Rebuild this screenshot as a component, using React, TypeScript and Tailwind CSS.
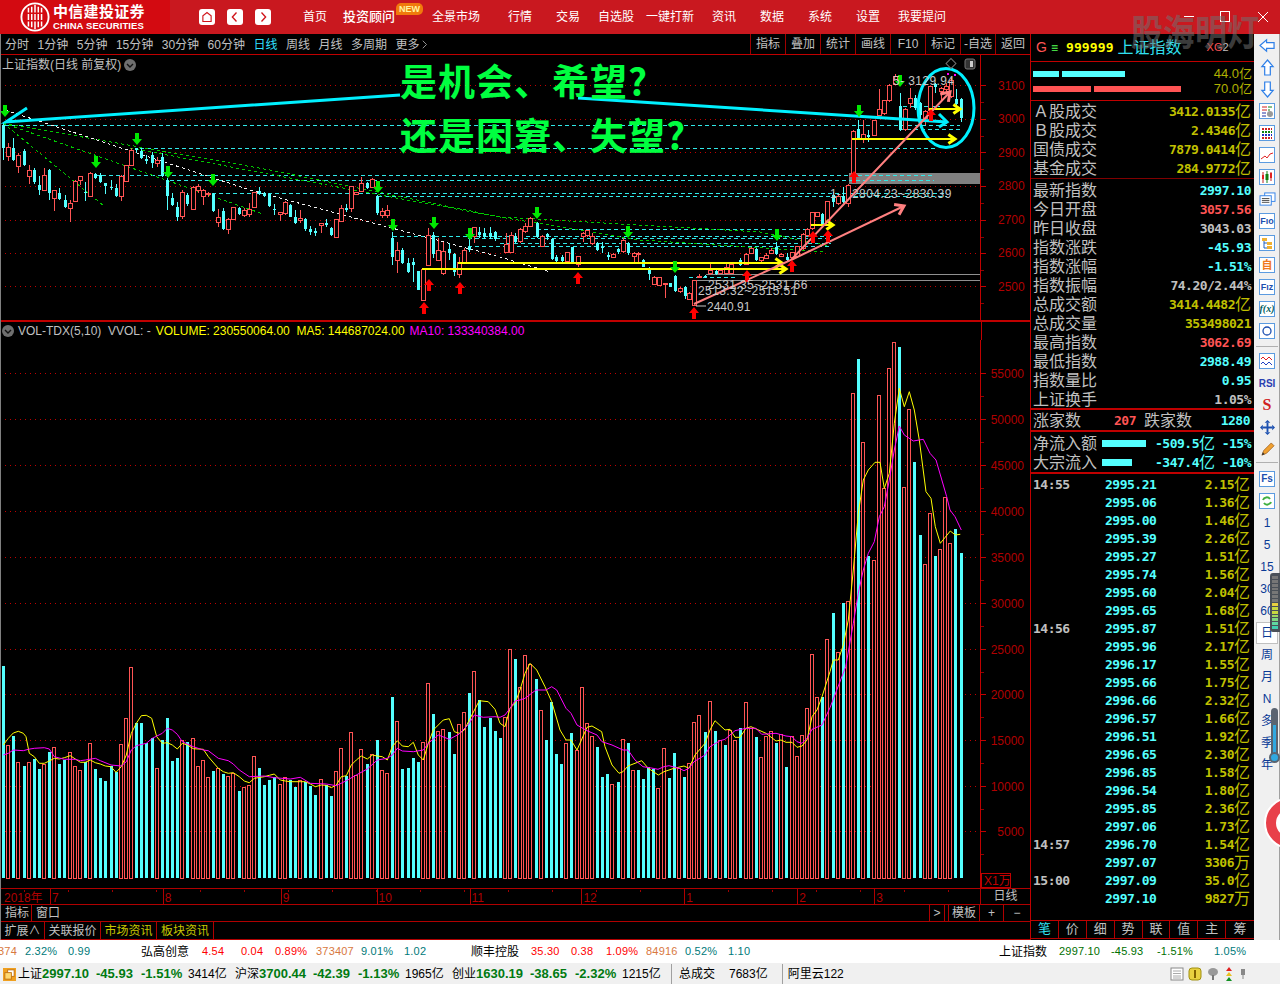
import React from "react";

const CY = "#54ffff";
const RD = "#ff5454";

type Bar = { k: string; x: number; t: number };

const parseBars = (s: string, fx: (v: number) => number, fy: (v: number) => number): Bar[] =>
  s.trim().split(/\s+/).map((p) => {
    const [a, b] = p.slice(1).split(":");
    return { k: p[0], x: fx(+a), t: fy(+b) };
  });

const vol1 = parseBars(
  "c10:78 r25:315 c40:288 r55:366 c73:378 r88:366 c103:357 c118:387 r133:372 c148:336 r163:321 c178:372 c193:360 r211:336 r226:378 r241:390 c256:366 r271:309 c286:387 c301:414 c316:423 c333:378 c348:396 r364:312 r379:234 r394:81 c409:249 c424:249 c439:309 c457:294 r472:384 c487:300 c502:234 c517:363 c532:354 r547:300 c562:306 r580:294 r595:378 r610:360 r625:411 c640:393 r655:384 c670:402 r685:408 r700:399 c718:453 r733:441 r748:435 r763:348 c778:384 c793:435 c808:420 c823:411 r841:432 r856:411 c871:420 c886:441 r901:420 c916:426 c931:438 c946:465 r964:417 c979:435 c994:468 r1009:393 r1024:324 c1039:408 r1054:276 r1069:405 r1084:327 c1102:372 r1117:342 c1132:300 r1147:390 r1162:399 c1177:171 r1192:243 c1207:387 c1225:384 c1240:354 c1255:366 r1270:306 r1285:129 c1300:222 r1315:273 r1330:267 c1348:276 c1363:342 r1378:252 r1393:216 c1408:159 r1423:93 c1438:180 c1453:261 c1471:234",
  (v) => v / 3,
  (v) => 640 + v / 3
);
const vol2 = parseBars(
  "c0:273 c15:294 r30:232 r45:27 c60:57 r75:141 r90:45 r105:72 c123:117 r138:210 c153:300 c168:186 c183:342 c198:372 r213:309 c228:279 r246:330 r261:141 r276:249 r291:288 c306:321 c321:411 c336:402 r351:432 c369:426 r384:297 c399:309 r414:390 c429:390 c444:417 c459:381 c474:387 r489:444 r507:324 c522:414 c537:339 r552:384 c567:411 r582:369 r597:246 r612:225 c630:276 r645:183 c660:273 r675:300 c690:315 r705:270 r720:300 c735:264 r753:186 r768:264 c783:291 r798:351 r813:288 r828:273 c843:309 r858:282 c873:381 r891:288 r906:348 r921:285 r936:204 r951:42 r966:171 c981:171",
  (v) => 495 + v / 3,
  (v) => 640 + v / 3
);
const vol3 = parseBars(
  "r382:897 c400:819 r415:936 c430:789 r445:783 r460:159 c475:57 r490:306 c505:648 r523:660 r538:165 r553:444 r568:84 r583:6 c598:21 r613:441 r628:207 c643:366 c661:585 r676:672 r691:519 c706:648 r721:627 r736:471 r751:609 c766:567 c784:639",
  (v) => 700 + v / 3,
  (v) => 340 + v / 3
);
const volBars = [...vol1, ...vol2, ...vol3];

const pts = (s: string, fx: (v: number) => number, fy: (v: number) => number) =>
  s.trim().split(/\s+/).map((p) => {
    const [a, b] = p.split(",");
    return `${fx(+a).toFixed(1)},${fy(+b).toFixed(1)}`;
  }).join(" ");

const x9 = (v: number) => v / 3;
const y9 = (v: number) => 640 + v / 3;
const x12 = (v: number) => 495 + v / 3;
const x10 = (v: number) => 700 + v / 3;
const y10 = (v: number) => 340 + v / 3;

const yellowLine = [
  pts("10,315 25,295 40,279 55,274 70,280 78,290 88,340 103,350 118,370 133,370 148,363 163,355 178,357 193,353 211,347 226,357 241,367 256,367 271,360 286,368 301,372 316,378 333,380 348,397 364,380 379,345 394,280 409,250 424,227 439,226 455,235 470,290 487,310 502,308 517,315 532,327 547,310 562,315 580,326 610,328 625,350 655,385 670,395 685,400 700,398 718,410 733,423 748,428 763,415 793,410 808,406 823,402 841,420 856,423 871,425 901,425 916,425 931,432 946,440 964,435 979,436 994,443 1009,435 1024,410 1039,407 1054,375 1069,360 1084,348 1102,357 1117,345 1132,348 1147,350 1162,360 1177,320 1192,302 1207,318 1225,320 1240,307 1255,345 1270,360 1285,310 1300,270 1330,240 1348,236 1363,275 1378,280 1393,270 1408,240 1438,182 1465,185", x9, y9),
  pts("0,208 15,250 30,260 45,205 60,190 75,150 90,100 105,70 125,90 150,140 170,185 195,270 213,300 228,300 246,330 276,262 291,258 320,275 330,320 351,375 372,400 384,395 399,378 440,362 460,385 490,405 507,395 537,385 567,378 582,385 600,345 630,310 645,270 660,242 690,270 705,268 720,292 735,292 753,265 768,260 813,280 843,303 858,300 873,307 891,307 906,322 921,318 936,300 951,230 966,210 981,170 1005,95", x12, y9),
  pts("400,960 415,960 430,915 445,840 460,690 475,520 490,420 505,390 525,367 540,367 553,445 568,400 583,250 598,145 613,200 628,155 643,210 658,300 678,455 693,475 706,560 721,610 751,573 766,585 781,583", x10, y10),
].join(" ");

const magentaLine = [
  pts("10,345 25,340 40,330 70,332 85,328 103,325 133,323 148,327 163,350 193,358 226,358 241,362 256,360 286,355 301,362 333,375 364,378 379,365 394,330 409,317 439,310 457,295 487,280 502,265 517,270 532,283 547,305 580,320 610,330 625,332 655,355 685,362 700,372 718,390 748,410 793,408 823,413 871,417 901,412 931,430 979,432 1009,437 1039,422 1069,405 1102,387 1132,360 1162,355 1177,345 1192,325 1207,333 1240,335 1270,330 1285,310 1315,285 1348,298 1378,282 1408,250 1423,225 1450,232", x9, y9),
  pts("0,230 15,232 30,225 45,205 60,183 75,180 90,175 123,150 153,150 170,140 185,150 213,205 228,220 246,255 276,272 306,285 321,305 351,315 384,330 399,330 420,360 444,380 474,385 489,388 507,380 522,377 552,385 567,392 582,385 597,365 630,345 645,320 675,302 690,298 720,272 753,265 783,265 800,283 843,280 873,288 891,290 906,305 921,310 936,295 951,268 981,255 1005,203", x12, y9),
  pts("437,980 460,850 475,760 490,690 505,640 523,605 538,530 553,500 568,420 583,330 598,258 613,285 640,303 670,298 690,340 708,360 740,470 750,510 765,530 784,570", x10, y10),
].join(" ");

type Cd = { k: string; x: number; h: number; t: number; b: number; l: number };
const parseCd = (s: string, fx: (v: number) => number, fy: (v: number) => number): Cd[] =>
  s.trim().split(/\s+/).map((p) => {
    const [a, h, t, b, l] = p.slice(1).split(",").map(Number);
    return { k: p[0], x: fx(a), h: fy(h), t: fy(t), b: fy(b), l: fy(l) };
  });

const candles1 = parseCd(
  "c10,70,75,145,180 r25,130,142,168,182 c40,115,145,180,182 r55,160,165,200,218 c73,148,152,195,198 r88,195,210,228,252 c103,205,210,245,252 c118,228,255,270,285 r133,205,225,270,272 c148,208,210,280,300 r163,270,270,295,332 c178,265,280,298,300 c196,285,300,322,325 r211,300,310,325,365 r226,240,243,305,305 r241,228,228,240,255 c256,245,275,278,302 r271,215,220,288,288 c286,220,222,235,238 c301,218,225,245,250 c316,248,250,258,282 c333,240,262,265,270 c348,252,265,288,292 r364,225,228,288,302 r379,195,195,243,245 r394,145,150,197,197 c409,143,145,150,160 c424,145,152,175,178 c439,165,178,183,192 c457,155,165,190,205 r472,172,180,190,200 c487,160,172,228,230 c502,235,240,288,330 c517,280,293,315,318 c532,305,320,350,362 r547,270,278,348,358 c562,278,285,313,318 r580,258,262,328,330 r595,252,258,272,278 r610,268,272,288,315 r625,275,280,282,290 c640,278,282,332,335 r655,328,352,368,382 c670,325,332,388,390 r685,355,358,388,402 r700,320,322,358,360 c718,322,325,342,345 r733,325,332,345,352 r748,310,328,342,352 r763,275,278,322,325 c778,262,272,282,285 c793,275,280,288,292 c808,278,282,318,320 c823,312,328,330,345 r841,335,338,342,362 r856,302,308,340,345 c871,312,315,350,352 c886,330,350,368,372 r901,330,355,362,368 c916,355,358,388,392 c931,378,388,395,405 c946,385,392,398,408 r964,368,370,375,400 c979,358,368,375,382 c994,382,385,405,408 r1009,358,358,412,412 r1024,315,325,365,365 c1039,312,325,330,335 r1054,258,260,325,335 r1069,275,277,283,285 r1084,232,250,275,275 c1102,245,248,265,268 r1117,235,238,262,262 c1132,285,288,340,345 r1147,325,335,345,355 r1162,315,330,345,355 c1177,395,415,472,495 r1192,425,452,480,518 c1207,445,450,490,492 c1225,475,490,515,520 c1240,475,485,495,545 c1255,512,514,570,570 r1270,508,508,600,600 r1285,385,405,495,495 c1300,395,405,462,475 r1315,415,452,480,480 r1330,425,455,520,525 c1348,430,448,460,480 c1363,460,462,515,528 r1378,470,488,522,535 r1393,445,452,488,488 c1408,415,440,450,455 r1423,382,382,410,430 c1438,380,395,405,415 c1453,385,400,410,418 c1471,380,398,412,418 c1486,392,396,418,422",
  (v) => v / 3,
  (v) => 100 + v / 3
);
const candles2 = parseCd(
  "r18,520,552,578,580 r32,515,525,578,580 c45,520,528,545,548 r60,505,508,545,548 r75,490,498,515,520 r90,472,475,498,500 c108,485,490,530,535 r123,525,530,558,560 c138,518,522,530,540 c153,535,537,597,600 c167,585,590,603,610 c182,585,590,603,605 r197,575,577,605,610 c212,560,562,605,608 r230,588,590,612,622 r245,515,520,530,545 r258,510,512,525,530 r273,520,528,550,555 c288,545,548,570,572 c303,545,560,565,578 c318,575,585,590,600 r333,580,584,593,595 c350,565,568,575,582 r365,535,540,575,578 c380,545,550,580,585 r395,575,580,590,605 r408,575,580,582,605 c423,598,600,622,622 c440,622,630,642,660 r455,648,652,672,675 r470,652,652,675,675 r487,668,670,672,715 c502,668,670,680,682 c517,645,648,692,695 r532,680,684,695,698 c547,678,680,708,718 r560,695,700,718,720 r575,660,662,735,735 r590,642,648,650,655 c605,645,647,651,655 r622,612,632,640,645 c638,630,632,642,645 r652,625,630,640,642 r668,612,622,640,642 r683,610,612,640,642 c711,595,600,615,618 r728,580,582,612,615 r743,560,565,580,582 c757,565,568,600,602 r772,590,592,600,605 r787,580,585,595,598 r802,565,570,580,582 c817,545,560,582,585 r832,580,582,590,592 c850,578,592,600,605 r865,575,578,592,600 r880,558,560,590,595 r895,520,523,565,570 r908,505,508,525,528 r923,455,458,505,510 r938,455,458,470,472 c953,460,462,495,497 r968,422,425,495,498 c985,395,405,425,440 r1000,405,410,430,435 c1015,380,408,425,430 r1030,372,375,430,440 r1045,210,213,340,345 c1060,180,208,235,240 r1075,180,222,238,250 c1090,210,225,232,245 r1107,180,182,225,228 r1122,88,148,165,168 r1137,120,122,160,165 r1152,72,75,120,125 r1167,42,48,72,75 c1182,100,138,210,212 r1197,145,148,208,212 r1212,85,115,130,145 c1227,105,115,145,150 c1242,125,130,165,180 r1257,150,155,175,195 r1272,78,80,150,155 c1288,70,72,80,100 r1303,80,85,95,120 r1318,70,78,88,100 r1333,55,60,110,115 c1348,88,118,132,148 c1365,115,118,175,185",
  (v) => 500 + v / 2.958,
  (v) => 60 + v / 3
);
const candles = [...candles1, ...candles2];

const cyanDash: [number, number, number][] = [
  [125, 5, 960], [148, 140, 938], [175, 95, 934], [180, 170, 934], [193, 212, 947], [196, 378, 947],
  [229, 537, 810], [236, 393, 831], [238, 468, 831], [243, 500, 831], [246, 468, 831], [277, 689, 735], [106, 903, 940], [129, 900, 960],
];

const downArrows: [number, number][] = [
  [5, 111], [137, 139], [96, 162], [168, 172], [213, 180], [378, 187], [393, 225], [434, 223], [470, 234], [537, 213], [628, 232], [675, 267], [777, 235], [859, 111], [900, 81],
];
const upArrows: [number, number][] = [
  [424, 308], [429, 285], [460, 288], [578, 278], [694, 313], [747, 276], [792, 266], [813, 237], [828, 236], [854, 177], [931, 115],
];

const priceLabels: [string, number][] = [["3100", 85], ["3000", 118.5], ["2900", 152], ["2800", 185.5], ["2700", 219.5], ["2600", 252.5], ["2500", 286]];
const volLabels: [string, number][] = [["55000", 373], ["50000", 419], ["45000", 465], ["40000", 511], ["35000", 556.5], ["30000", 602.5], ["25000", 648.5], ["20000", 694], ["15000", 740], ["10000", 786], ["5000", 831]];

const Arrowhead = ({ x, y, a, c, s = 10 }: { x: number; y: number; a: number; c: string; s?: number }) => {
  const r = (o: number) => `${x - s * Math.cos(a + o)},${y - s * Math.sin(a + o)}`;
  return <polyline points={`${r(0.6)} ${x},${y} ${r(-0.6)}`} fill="none" stroke={c} strokeWidth={3} />;
};

function PriceChart() {
  return (
    <svg viewBox="0 55 1030 267" className="block w-[1030px] h-[267px]">
      <g shapeRendering="crispEdges">
        {priceLabels.map(([, y]) => (
          <line key={y} x1={0} x2={980} y1={Math.round(y)} y2={Math.round(y)} stroke="#c00000" strokeDasharray="1 4" />
        ))}
        <rect x={849} y={173} width={131} height={11} fill="#808080" />
        <line x1={706} x2={980} y1={274.5} y2={274.5} stroke="#909090" />
        <line x1={693} x2={980} y1={280.5} y2={280.5} stroke="#909090" />
        <line x1={693.5} x2={693.5} y1={280} y2={304} stroke="#909090" />
        {cyanDash.map(([y, a, b], i) => (
          <line key={i} x1={a} x2={b} y1={y + 0.5} y2={y + 0.5} stroke="#30e8e8" strokeDasharray="4 3" />
        ))}
      </g>
      <g fill="none" strokeDasharray="3 3" shapeRendering="crispEdges">
        <line x1={3} y1={123} x2={104} y2={206} stroke="#00c800" />
        <line x1={3} y1={123} x2={263} y2={214} stroke="#00c800" />
        <polyline points="3,123 270,170 500,217 640,240 825,252" stroke="#00c800" />
        <polyline points="130,148 380,195 500,217 760,232 830,246" stroke="#00c800" />
        <polyline points="5,110 250,190 500,257 550,272" stroke="#f0f0f0" />
      </g>
      <g shapeRendering="crispEdges">
        {candles.map((c, i) => {
          const x = Math.round(c.x);
          const col = c.k === "c" ? CY : RD;
          return (
            <g key={i}>
              <line x1={x + 0.5} x2={x + 0.5} y1={c.h} y2={c.l} stroke={col} />
              {c.k === "c" ? (
                <rect x={x - 1} y={c.t} width={3} height={Math.max(c.b - c.t, 1)} fill={col} />
              ) : (
                <rect x={x - 1.5} y={c.t} width={4} height={Math.max(c.b - c.t, 1)} fill="#000" stroke={col} />
              )}
            </g>
          );
        })}
      </g>
      {/* annotations */}
      <g stroke={CY} strokeWidth={3} fill="none">
        <polyline points="27,108 6,122 400,95" strokeLinejoin="miter" stroke="#00f0ff" />
        <polyline points="578,98 947,122" stroke="#00f0ff" />
        <polyline points="939,114 947,122 939,127" stroke="#00f0ff" />
        <ellipse cx={946} cy={108} rx={28} ry={39.5} stroke="#00f0ff" />
      </g>
      <g stroke="#ffff00" strokeWidth={2} fill="none" shapeRendering="crispEdges">
        <line x1={422} x2={784} y1={269} y2={269} />
        <line x1={458} x2={780} y1={263} y2={263} />
        <line x1={852} x2={953} y1={139} y2={139} />
        <line x1={929} x2={958} y1={109} y2={109} />
        <line x1={811} x2={831} y1={225} y2={225} />
      </g>
      <Arrowhead x={786} y={269} a={0} c="#ffff00" s={8} />
      <Arrowhead x={782} y={263} a={0} c="#ffff00" s={8} />
      <Arrowhead x={955} y={139} a={0} c="#ffff00" s={8} />
      <Arrowhead x={960} y={109} a={0} c="#ffff00" s={8} />
      <Arrowhead x={833} y={225} a={0} c="#ffff00" s={8} />
      <g stroke="#ff8080" strokeWidth={2} fill="none">
        <polyline points="694,304 791,260 950,92" />
        <polyline points="791,260 904,206" />
      </g>
      <Arrowhead x={950} y={92} a={-0.81} c="#ff8080" s={10} />
      <Arrowhead x={904} y={206} a={-0.45} c="#ff8080" s={10} />
      {downArrows.map(([x, y], i) => (
        <polygon key={i} fill="#00e800" points={`${x - 2},${y - 6} ${x + 2},${y - 6} ${x + 2},${y} ${x + 5},${y} ${x},${y + 6} ${x - 5},${y} ${x - 2},${y}`} />
      ))}
      {upArrows.map(([x, y], i) => (
        <polygon key={i} fill="#ff0000" points={`${x - 2},${y + 6} ${x + 2},${y + 6} ${x + 2},${y} ${x + 5},${y} ${x},${y - 6} ${x - 5},${y} ${x - 2},${y}`} />
      ))}
      <rect x={947} y={73} width={2} height={2} fill="#ff00ff" />
      <rect x={954} y={74} width={2} height={2} fill="#ff00ff" />
      <g fontSize={12} fill="#c8c8c8">
        <text x={893} y={85} letterSpacing={0.4}>5- 3129.94</text>
        <text x={830} y={198}>1-</text>
        <text x={852} y={198} letterSpacing={0.4}>2804.23~2830.39</text>
        <text x={708} y={289} letterSpacing={0.4}>2531.35~2531.66</text>
        <text x={698} y={295} letterSpacing={0.4}>2513.32~2515.51</text>
        <line x1={696} x2={706} y1={306} y2={306} stroke="#c8c8c8" />
        <text x={707} y={311}>2440.91</text>
      </g>
      <rect x={947.5} y={60} width={7} height={7} fill="none" stroke="#707070" transform="rotate(45 951 63.5)" />
      <rect x={965} y={59} width={10} height={10} rx={2} fill="#333" stroke="#777" />
      <rect x={970} y={61} width={3} height={6} fill="#ccc" />
      {/* axis */}
      <g shapeRendering="crispEdges">
        <line x1={980.5} x2={980.5} y1={55} y2={322} stroke="#c00000" />
        {priceLabels.map(([, y]) => (
          <g key={y}>
            <line x1={981} x2={986} y1={Math.round(y)} y2={Math.round(y)} stroke="#c00000" />
            <line x1={981} x2={984} y1={Math.round(y) + 17} y2={Math.round(y) + 17} stroke="#900000" />
          </g>
        ))}
      </g>
      <g fontSize={12} fill="#b00000">
        {priceLabels.map(([t, y]) => (
          <text key={t} x={998} y={y + 4.5}>{t}</text>
        ))}
      </g>
    </svg>
  );
}

function VolumeChart() {
  return (
    <svg viewBox="0 340 1030 548" className="block w-[1030px] h-[548px]">
      <g shapeRendering="crispEdges">
        {volLabels.map(([, y]) => (
          <line key={y} x1={0} x2={980} y1={Math.round(y)} y2={Math.round(y)} stroke="#c00000" strokeDasharray="1 4" />
        ))}
        {volBars.map((b, i) => {
          const x = Math.round(b.x);
          return b.k === "c" ? (
            <rect key={i} x={x - 1} y={b.t} width={3} height={878 - b.t} fill={CY} />
          ) : (
            <rect key={i} x={x - 1.5} y={b.t} width={3} height={878 - b.t} fill="#000" stroke={RD} />
          );
        })}
        <line x1={980.5} x2={980.5} y1={340} y2={888} stroke="#c00000" />
        {volLabels.map(([, y]) => (
          <g key={y}>
            <line x1={981} x2={986} y1={Math.round(y)} y2={Math.round(y)} stroke="#c00000" />
            <line x1={981} x2={984} y1={Math.round(y) + 23} y2={Math.round(y) + 23} stroke="#900000" />
          </g>
        ))}
      </g>
      <polyline points={yellowLine} fill="none" stroke="#ffff00" />
      <polyline points={magentaLine} fill="none" stroke="#ff00ff" />
      <g fontSize={12} fill="#b00000">
        {volLabels.map(([t, y]) => (
          <text key={t} x={1024} y={y + 5} textAnchor="end">{t}</text>
        ))}
      </g>
      <rect x={981.5} y={873.5} width={29} height={14} fill="none" stroke="#c00000" />
      <text x={984} y={885} fontSize={12} fill="#c00000">X1万</text>
    </svg>
  );
}

function DateAxis() {
  const months: [string, number][] = [["7", 49], ["8", 162], ["9", 280], ["10", 376], ["11", 469], ["12", 581], ["1", 684], ["2", 797], ["3", 874]];
  return (
    <div className="flex h-[16px] border-t border-[#b00000]">
      <svg viewBox="0 888 980 16" className="block w-[980px] h-[16px]">
        {Array.from({ length: 22 }).map((_, i) => (
          <line key={i} x1={24 + i * 44} x2={24 + i * 44} y1={889} y2={891} stroke="#a00000" shapeRendering="crispEdges" />
        ))}
        <text x={3} y={901} fontSize={12} fill="#b00000">2018年</text>
        {months.map(([t, x]) => (
          <g key={t + x}>
            <line x1={x + 0.5} x2={x + 0.5} y1={888} y2={904} stroke="#b00000" shapeRendering="crispEdges" />
            <text x={x + 2} y={901} fontSize={12} fill="#b00000">{t}</text>
          </g>
        ))}
      </svg>
      <div className="w-[50px] border-l border-[#b00000] text-center text-[12px] leading-[15px] text-[#c0c0c0]">日线</div>
    </div>
  );
}

const HomeIcon = () => (
  <svg viewBox="0 0 16 16" className="w-[12px] h-[12px]" fill="none" stroke="#d0141a" strokeWidth="1.5"><path d="M2.5 14V6.5L8 2l5.5 4.5V14z" /></svg>
);
const Chev = ({ left }: { left?: boolean }) => (
  <svg viewBox="0 0 16 16" className="w-[12px] h-[12px]" fill="none" stroke="#d0141a" strokeWidth="1.8"><path d={left ? "M10 2 4.5 8l5.5 6" : "M6 2l5.5 6L6 14"} /></svg>
);
const NavBtn = ({ children }: { children: React.ReactNode }) => (
  <div className="flex h-[16px] w-[16px] items-center justify-center rounded-[3px] bg-white">{children}</div>
);

function Header() {
  return (
    <div className="flex h-[34px] items-center bg-[#c9181f] text-white">
      <div className="flex h-[34px] w-[170px] items-center bg-[#d30a11] pl-[20px]">
        <svg viewBox="0 0 32 32" className="h-[30px] w-[30px] shrink-0">
          <circle cx="16" cy="16" r="14.5" fill="#d30a11" stroke="#fff" strokeWidth="2" />
          <path d="M9 6v20M23 6v20M16 3v26M12.5 5v22M19.5 5v22" stroke="#fff" strokeWidth="1.6" />
          <path d="M5 12h22M5 20h22" stroke="#d30a11" strokeWidth="1.4" />
        </svg>
        <div className="ml-[3px] flex flex-col">
          <span className="whitespace-nowrap text-[15px] font-bold leading-[18px] tracking-[0.3px]">中信建投证券</span>
          <span className="whitespace-nowrap text-[9.5px] font-bold leading-[10px] tracking-[0.1px]">CHINA SECURITIES</span>
        </div>
      </div>
      <div className="ml-[29px] flex gap-[12px]">
        <NavBtn><HomeIcon /></NavBtn>
        <NavBtn><Chev left /></NavBtn>
        <NavBtn><Chev /></NavBtn>
      </div>
      <div className="ml-[32px] flex items-center whitespace-nowrap text-[12px]">
        <span className="w-[40px]">首页</span>
        <span className="relative w-[89px] text-[13px] font-medium">
          投资顾问
          <span className="absolute left-[53px] top-[-4px] rounded-t-[5px] rounded-br-[5px] bg-[#f07a0c] px-[3px] text-[9px] font-bold leading-[12px] text-[#fff4a0]">NEW</span>
        </span>
        <span className="w-[76px]">全景市场</span>
        <span className="w-[48px]">行情</span>
        <span className="w-[42px]">交易</span>
        <span className="w-[48px]">自选股</span>
        <span className="w-[66px]">一键打新</span>
        <span className="w-[48px]">资讯</span>
        <span className="w-[48px]">数据</span>
        <span className="w-[48px]">系统</span>
        <span className="w-[42px]">设置</span>
        <span>我要提问</span>
      </div>
    </div>
  );
}

function Toolbar() {
  const left = ["分时", "1分钟", "5分钟", "15分钟", "30分钟", "60分钟"];
  const right = ["叠加", "统计", "画线", "F10", "标记", "-自选", "返回"];
  return (
    <div className="flex h-[21px] items-center justify-between border-b border-[#c00000] text-[12px] text-[#c0c0c0]">
      <div className="flex items-center gap-[8.5px] pl-[4px] pt-[1px]">
        {left.map((t) => <span key={t}>{t}</span>)}
        <span className="text-[#30e0ff]">日线</span>
        <span>周线</span>
        <span>月线</span>
        <span>多周期</span>
        <span className="flex items-center">更多
          <svg viewBox="0 0 8 12" className="ml-[2px] h-[11px] w-[6px]" fill="none" stroke="#c0c0c0"><path d="M1 1l5 5-5 5" /></svg>
        </span>
      </div>
      <div className="flex h-full">
        <span className="flex w-[35px] items-center justify-center border-l border-[#a00000]">指标</span>
        {right.map((t) => (
          <span key={t} className="flex w-[35px] items-center justify-center border-l border-[#a00000]">{t}</span>
        ))}
      </div>
    </div>
  );
}

const CircleDown = () => (
  <svg viewBox="0 0 12 12" className="h-[12px] w-[12px] shrink-0">
    <circle cx="6" cy="6" r="6" fill="#6f6f6f" />
    <path d="M3 5l3 3 3-3" fill="none" stroke="#111" strokeWidth="1.4" />
  </svg>
);

function ChartColumn() {
  return (
    <div className="relative flex w-[1030px] flex-col overflow-hidden border-l border-[#808080]">
      <Toolbar />
      <div className="relative h-[267px] border-b-2 border-[#c00000]">
        <div className="-ml-px">
          <PriceChart />
        </div>
        <div className="absolute left-[1px] top-[3px] flex items-center gap-[3px] text-[12px] leading-[14px] text-[#c0c0c0]">
          <span>上证指数(日线 前复权)</span>
          <CircleDown />
        </div>
        <div className="absolute left-[399px] top-[5px] whitespace-nowrap font-['Noto_Sans_CJK_SC',sans-serif] text-[37px] font-bold leading-[40px] tracking-[1px] text-[#00ff40]">是机会、希望?</div>
        <div className="absolute left-[399px] top-[59px] whitespace-nowrap font-['Noto_Sans_CJK_SC',sans-serif] text-[37px] font-bold leading-[40px] tracking-[1px] text-[#00ff40]">还是困窘、失望?</div>
      </div>
      <div className="flex h-[18px] w-[981px] items-center gap-[4px] border-r border-[#c00000] pl-[1px] text-[12px] leading-[14px]">
        <CircleDown />
        <span className="text-[#c0c0c0]">VOL-TDX(5,10)&nbsp; VVOL: -</span>
        <span className="ml-[1px] text-[#ffff00]">VOLUME: 230550064.00&nbsp; MA5: 144687024.00</span>
        <span className="ml-[1px] text-[#ff00ff]">MA10: 133340384.00</span>
      </div>
      <div className="-ml-px">
        <VolumeChart />
      </div>
      <DateAxis />
      <div className="flex h-[18px] items-center border-y border-[#b00000] text-[12px] text-[#c0c0c0]">
        <span className="w-[31px] border-r border-[#b00000] pl-[4px]">指标</span>
        <span className="ml-[4px]">窗口</span>
        <div className="ml-auto flex h-full items-center">
          <span className="flex h-full w-[15px] items-center justify-center border-l border-[#b00000]">&gt;</span>
          <span className="h-full w-[5px] border-x border-[#b00000]" />
          <span className="flex h-full w-[31px] items-center justify-center border-r border-[#b00000]">模板</span>
          <span className="flex h-full w-[24px] items-center justify-center border-r border-[#b00000]">+</span>
          <span className="flex h-full w-[26px] items-center justify-center">−</span>
        </div>
      </div>
      <div className="flex h-[18px] items-center border-b border-[#b00000] text-[12px] text-[#c0c0c0]">
        <span className="flex h-full w-[44px] items-center justify-center border-r border-[#b00000]">扩展∧</span>
        <span className="flex h-full w-[56px] items-center justify-center border-r border-[#b00000]">关联报价</span>
        <span className="flex h-full w-[56px] items-center justify-center border-r border-[#b00000] text-[#c8c800]">市场资讯</span>
        <span className="flex h-full w-[57px] items-center justify-center border-r border-[#b00000] text-[#c8c800]">板块资讯</span>
      </div>
    </div>
  );
}

const NUM = "font-['DejaVu_Sans_Mono'] text-[13px] font-bold tracking-[-0.5px]";

const Yi = ({ u = "亿" }: { u?: string }) => <span className="w-[16px] text-[16px] font-normal leading-[18px] text-[#c0c000]">{u}</span>;

function InfoRow({ label, value, cls, unit }: { label: string; value: string; cls: string; unit?: boolean }) {
  return (
    <div className="flex h-[19px] items-center justify-between pl-[2px] pr-[3px]">
      <span className="text-[16px] leading-[19px] text-[#c0c0c0]">{label}</span>
      <span className="flex items-center">
        <span className={`${NUM} ${cls}`}>{value}</span>
        {unit && <Yi />}
      </span>
    </div>
  );
}

type Tick = { time?: string; p: string; v: string; u: string };
const ticks: Tick[] = [
  { time: "14:55", p: "2995.21", v: "2.15", u: "亿" }, { p: "2995.06", v: "1.36", u: "亿" }, { p: "2995.00", v: "1.46", u: "亿" }, { p: "2995.39", v: "2.26", u: "亿" },
  { p: "2995.27", v: "1.51", u: "亿" }, { p: "2995.74", v: "1.56", u: "亿" }, { p: "2995.60", v: "2.04", u: "亿" }, { p: "2995.65", v: "1.68", u: "亿" },
  { time: "14:56", p: "2995.87", v: "1.51", u: "亿" }, { p: "2995.96", v: "2.17", u: "亿" }, { p: "2996.17", v: "1.55", u: "亿" }, { p: "2995.66", v: "1.75", u: "亿" },
  { p: "2996.66", v: "2.32", u: "亿" }, { p: "2996.57", v: "1.66", u: "亿" }, { p: "2996.51", v: "1.92", u: "亿" }, { p: "2996.65", v: "2.30", u: "亿" },
  { p: "2996.85", v: "1.58", u: "亿" }, { p: "2996.54", v: "1.80", u: "亿" }, { p: "2995.85", v: "2.36", u: "亿" }, { p: "2997.06", v: "1.73", u: "亿" },
  { time: "14:57", p: "2996.70", v: "1.54", u: "亿" }, { p: "2997.07", v: "3306", u: "万" },
  { time: "15:00", p: "2997.09", v: "35.0", u: "亿" }, { p: "2997.10", v: "9827", u: "万" },
];

function RightPanel() {
  return (
    <div className="flex w-[224px] flex-col border-l border-[#c00000]">
      <div className="flex h-[28px] items-center border-b border-[#c00000] pl-[5px]">
        <span className="w-[10px] text-[14px] text-[#ff5454]">G</span>
        <span className="ml-[5px] w-[8px] text-[12px] text-[#54ff54]">≡</span>
        <span className="ml-[7px] font-['DejaVu_Sans_Mono'] text-[13px] font-bold tracking-[0.1px] text-[#ffff00]">999999</span>
        <span className="ml-[4px] text-[16px] leading-[20px] text-[#30e0f0]">上证指数</span>
        <span className="ml-[25px] text-[11px] text-[#ff5454]">XG</span>
        <span className="text-[11px] text-[#c0c0c0]">2</span>
      </div>
      <div className="flex h-[39px] flex-col border-b border-[#c00000] pr-[2px] pt-[4px]">
        <div className="flex h-[15px] items-center pl-[2px]">
          <div className="flex gap-[3px]">
            <div className="h-[6px] w-[26px] bg-[#54ffff]" />
            <div className="h-[6px] w-[63px] bg-[#54ffff]" />
          </div>
          <span className="ml-auto text-[13px] leading-[15px] text-[#b0b000]">44.0亿</span>
        </div>
        <div className="flex h-[15px] items-center pl-[2px]">
          <div className="flex gap-[3px]">
            <div className="h-[6px] w-[58px] bg-[#ff5454]" />
            <div className="h-[6px] w-[87px] bg-[#ff5454]" />
          </div>
          <span className="ml-auto text-[13px] leading-[15px] text-[#b0b000]">70.0亿</span>
        </div>
      </div>
      <div className="h-[78px] border-b border-[#800000] pt-[1px]">
        <InfoRow label="Ａ股成交" value="3412.0135" cls="text-[#c0c000]" unit />
        <InfoRow label="Ｂ股成交" value="2.4346" cls="text-[#c0c000]" unit />
        <InfoRow label="国债成交" value="7879.0414" cls="text-[#c0c000]" unit />
        <InfoRow label="基金成交" value="284.9772" cls="text-[#c0c000]" unit />
      </div>
      <div className="h-[231px] border-b-2 border-[#c00000] pt-[2px]">
        <InfoRow label="最新指数" value="2997.10" cls="text-[#54ffff]" />
        <InfoRow label="今日开盘" value="3057.56" cls="text-[#ff5454]" />
        <InfoRow label="昨日收盘" value="3043.03" cls="text-[#c0c0c0]" />
        <InfoRow label="指数涨跌" value="-45.93" cls="text-[#54ffff]" />
        <InfoRow label="指数涨幅" value="-1.51%" cls="text-[#54ffff]" />
        <InfoRow label="指数振幅" value="74.20/2.44%" cls="text-[#c0c0c0]" />
        <InfoRow label="总成交额" value="3414.4482" cls="text-[#c0c000]" unit />
        <InfoRow label="总成交量" value="353498021" cls="text-[#c0c000]" />
        <InfoRow label="最高指数" value="3062.69" cls="text-[#ff5454]" />
        <InfoRow label="最低指数" value="2988.49" cls="text-[#54ffff]" />
        <InfoRow label="指数量比" value="0.95" cls="text-[#54ffff]" />
        <InfoRow label="上证换手" value="1.05%" cls="text-[#c0c0c0]" />
      </div>
      <div className="flex h-[22px] items-center justify-between border-b-2 border-[#c00000] pl-[2px] pr-[4px] pt-[1px]">
        <span className="w-[81px] text-[16px] text-[#c0c0c0]">涨家数</span>
        <span className={`${NUM} text-[#ff5454]`}>207</span>
        <span className="ml-[8px] text-[16px] text-[#c0c0c0]">跌家数</span>
        <span className={`${NUM} ml-auto text-[#54ffff]`}>1280</span>
      </div>
      <div className="h-[42px] border-b-2 border-[#c00000] pr-[3px] pt-[2px]">
        <div className="flex h-[19px] items-center pl-[2px]">
          <span className="w-[69px] text-[16px] leading-[19px] text-[#c0c0c0]">净流入额</span>
          <div className="h-[7px] w-[44px] bg-[#54ffff]" />
          <span className={`${NUM} ml-[9px] text-[#54ffff]`}>-509.5</span>
          <span className="text-[16px] leading-[19px] text-[#54ffff]">亿</span>
          <span className={`${NUM} ml-auto text-[#54ffff]`}>-15%</span>
        </div>
        <div className="flex h-[19px] items-center pl-[2px]">
          <span className="w-[69px] text-[16px] leading-[19px] text-[#c0c0c0]">大宗流入</span>
          <div className="h-[7px] w-[30px] bg-[#54ffff]" />
          <span className={`${NUM} ml-[23px] text-[#54ffff]`}>-347.4</span>
          <span className="text-[16px] leading-[19px] text-[#54ffff]">亿</span>
          <span className={`${NUM} ml-auto text-[#54ffff]`}>-10%</span>
        </div>
      </div>
      <div className="flex h-[447px] flex-col border-b border-[#c00000] pt-[2px]">
        {ticks.map((t, i) => (
          <div key={i} className="flex h-[18px] items-center pl-[2px] pr-[4px]">
            <span className={`${NUM} w-[72px] text-[#c0c0c0]`}>{t.time ?? ""}</span>
            <span className={`${NUM} text-[#54ffff]`}>{t.p}</span>
            <span className="ml-auto flex items-center">
              <span className={`${NUM} text-[#c0c000]`}>{t.v}</span>
              <Yi u={t.u} />
            </span>
          </div>
        ))}
      </div>
      <div className="grid h-[18px] grid-cols-8 border-b border-[#b00000] text-[13px] leading-[16px] text-[#c0c0c0]">
        {["笔", "价", "细", "势", "联", "值", "主", "筹"].map((t, i) => (
          <span key={t} className={i === 0 ? "border-r border-[#b00000] text-center text-[#30e0f0]" : "border-r border-[#b00000] text-center last:border-r-0"}>{t}</span>
        ))}
      </div>
    </div>
  );
}

const Box = ({ children }: { children: React.ReactNode }) => (
  <div className="flex h-[16px] w-[16px] items-center justify-center overflow-hidden border border-[#5b9be0] bg-white text-[9px] font-bold leading-none text-[#1c4fb0]">{children}</div>
);

const SideRow = ({ children }: { children: React.ReactNode }) => (
  <div className="flex h-[22px] items-center justify-center">{children}</div>
);

function Sidebar() {
  const nums = ["1", "5", "15", "30", "60"];
  const cn = ["周", "月", "N", "多", "季", "年"];
  const strokeB = "#2f80e8";
  return (
    <div className="relative flex w-[26px] flex-col border-r border-[#a0a0a0] bg-[#f0f0f0] pl-[1px]">
      <SideRow><svg viewBox="0 0 18 16" className="h-[15px] w-[17px]" fill="#fff" stroke={strokeB} strokeWidth="1.3"><path d="M1 8l7-6v3h8v6H8v3z" /></svg></SideRow>
      <SideRow><svg viewBox="0 0 16 18" className="h-[17px] w-[15px]" fill="#fff" stroke={strokeB} strokeWidth="1.3"><path d="M8 1l6 7h-3v9H5V8H2z" /></svg></SideRow>
      <SideRow><svg viewBox="0 0 16 18" className="h-[17px] w-[15px]" fill="#fff" stroke={strokeB} strokeWidth="1.3"><path d="M8 17l6-7h-3V1H5v9H2z" /></svg></SideRow>
      <SideRow><Box><svg viewBox="0 0 14 14" className="h-[14px] w-[14px]"><path d="M2 3h5M2 6h5" stroke="#d02020" /><path d="M8 3h4M8 6h2" stroke="#108010" /><path d="M2 9h4M2 12h4" stroke="#2030a0" /><circle cx="10" cy="10" r="3" fill="#999" /></svg></Box></SideRow>
      <SideRow><Box><svg viewBox="0 0 14 14" className="h-[14px] w-[14px]"><path d="M2 3h10" stroke="#d02020" strokeWidth="2" strokeDasharray="2 1" /><path d="M2 6h10" stroke="#108010" strokeWidth="2" strokeDasharray="2 1" /><path d="M2 9h10" stroke="#2030c0" strokeWidth="2" strokeDasharray="2 1" /><path d="M2 12h10" stroke="#d02020" strokeWidth="2" strokeDasharray="2 1" /></svg></Box></SideRow>
      <SideRow><Box><svg viewBox="0 0 14 14" className="h-[14px] w-[14px]"><path d="M1 11l4-3 2 2 3-4 3-1" fill="none" stroke="#e02020" /></svg></Box></SideRow>
      <SideRow><Box><svg viewBox="0 0 14 14" className="h-[14px] w-[14px]"><path d="M3 2v11" stroke="#c02020" /><rect x="2" y="5" width="2" height="4" fill="#e02020" /><path d="M7 1v12" stroke="#108010" /><rect x="5.5" y="4" width="3" height="6" fill="#108010" /><path d="M11 2v9" stroke="#c02020" /><rect x="10" y="3" width="2" height="5" fill="#e02020" /></svg></Box></SideRow>
      <SideRow><svg viewBox="0 0 18 16" className="h-[15px] w-[17px]"><rect x="6" y="1" width="11" height="9" fill="#fff" stroke={strokeB} /><rect x="1" y="4" width="12" height="10" fill="#fff" stroke={strokeB} /><path d="M3 7h8M3 9h8M3 11h8" stroke="#444" /></svg></SideRow>
      <SideRow><Box><span>Fıo</span></Box></SideRow>
      <SideRow><Box><svg viewBox="0 0 14 14" className="h-[14px] w-[14px]"><rect x="2" y="2" width="5" height="3" fill="#f0b030" /><rect x="7" y="6" width="5" height="3" fill="#f0b030" /><rect x="7" y="10" width="5" height="3" fill="#f0b030" /><path d="M4 5v7h3M4 7h3" fill="none" stroke="#2060c0" /></svg></Box></SideRow>
      <SideRow><Box><span className="text-[11px] text-[#f07820]">自</span></Box></SideRow>
      <SideRow><Box><span>Fız</span></Box></SideRow>
      <SideRow><Box><span className="font-['Liberation_Serif'] text-[10px] italic text-[#006060]">f(x)</span></Box></SideRow>
      <SideRow><Box><svg viewBox="0 0 14 14" className="h-[14px] w-[14px]"><circle cx="7" cy="7" r="4" fill="none" stroke="#1c4fb0" strokeWidth="1.3" /></svg></Box></SideRow>
      <div className="mx-[1px] mt-[3px] h-[2px] border-b border-[#b0b0b0]" />
      <div className="h-[3px]" />
      <SideRow><Box><svg viewBox="0 0 14 14" className="h-[14px] w-[14px]" fill="none"><path d="M1 5l2-2 3 3 3-3 3 3" stroke="#e02020" /><path d="M1 10l2-2 3 3 3-3 3 3" stroke="#2040c0" /></svg></Box></SideRow>
      <SideRow><span className="text-[10px] font-bold text-[#2a3fb0]">RSI</span></SideRow>
      <SideRow><span className="font-['Liberation_Serif'] text-[16px] font-bold text-[#d02020]">S</span></SideRow>
      <SideRow><svg viewBox="0 0 16 16" className="h-[15px] w-[15px]" fill="#1c50b0"><path d="M8 0l3 3H5zM8 16l-3-3h6zM0 8l3-3v6zM16 8l-3 3V5z" /><path d="M8 3v10M3 8h10" stroke="#1c50b0" strokeWidth="2" /></svg></SideRow>
      <SideRow><svg viewBox="0 0 16 16" className="h-[15px] w-[15px]"><path d="M2 14l2-5 8-8 3 3-8 8z" fill="#f0a030" stroke="#905010" strokeWidth="0.7" /><path d="M2 14l1-3 2 2z" fill="#333" /></svg></SideRow>
      <div className="mx-[1px] h-[3px] border-b border-[#b0b0b0]" />
      <div className="h-[5px]" />
      <SideRow><Box><span className="text-[10px]">Fs</span></Box></SideRow>
      <SideRow><Box><svg viewBox="0 0 14 14" className="h-[14px] w-[14px]" fill="none" stroke="#40b040" strokeWidth="2"><path d="M3 6a4 4 0 0 1 7-1M11 8a4 4 0 0 1-7 1" /></svg></Box></SideRow>
      <div className="flex flex-col text-center text-[12px] text-[#0a3a96]">
        {nums.map((n) => <span key={n} className="h-[22px] leading-[22px]">{n}</span>)}
        <span className="mx-[1px] h-[22px] border border-[#c0c0c0] bg-white leading-[20px]">日</span>
        {cn.map((n) => <span key={n} className="h-[22px] leading-[22px]">{n}</span>)}
      </div>
      {/* floating widgets */}
      <div className="absolute left-[16px] top-[539px] flex h-[59px] w-[10px] flex-col gap-px rounded-l-[3px] bg-[#4a5058] px-[2px] py-[3px]">
        {["#777", "#777", "#777", "#777", "#777", "#777", "#777", "#e8d040", "#c8d840", "#c8d840", "#a0d860", "#80d880", "#60d8a0", "#40d0b0"].map((c, i) => (
          <div key={i} className="h-[3px] w-full" style={{ background: c }} />
        ))}
      </div>
      <div className="absolute left-[17px] top-[674px] h-[50px] w-[7px] rounded-full bg-[#5a6470]">
        <div className="mx-auto mt-[17px] h-[30px] w-[3px] bg-[#30a8e0]" />
      </div>
      <div className="absolute left-[15px] top-[718px] h-[11px] w-[11px] rounded-full border-2 border-[#5a6470] bg-[#30a8e0]" />
    </div>
  );
}

function QuoteStrip() {
  const N = "font-['Liberation_Sans'] text-[11px] tracking-[0.2px]";
  const T = "text-[#007a7a]";
  const R = "text-[#ff0000]";
  const O = "text-[#d87840]";
  return (
    <div className="relative flex h-[23px] items-center overflow-hidden bg-white text-black">
      <span className={`${N} ${O} ml-[-2px] w-[27px]`}>374</span>
      <span className={`${N} ${T} w-[43px]`}>2.32%</span>
      <span className={`${N} ${T} w-[73px]`}>0.99</span>
      <span className="w-[61px] text-[12px]">弘高创意</span>
      <span className={`${N} ${R} w-[39px]`}>4.54</span>
      <span className={`${N} ${R} w-[34px]`}>0.04</span>
      <span className={`${N} ${R} w-[41px]`}>0.89%</span>
      <span className={`${N} ${O} w-[45px]`}>373407</span>
      <span className={`${N} ${T} w-[43px]`}>9.01%</span>
      <span className={`${N} ${T} w-[67px]`}>1.02</span>
      <span className="w-[60px] text-[12px]">顺丰控股</span>
      <span className={`${N} ${R} w-[40px]`}>35.30</span>
      <span className={`${N} ${R} w-[35px]`}>0.38</span>
      <span className={`${N} ${R} w-[40px]`}>1.09%</span>
      <span className={`${N} ${O} w-[39px]`}>84916</span>
      <span className={`${N} ${T} w-[43px]`}>0.52%</span>
      <span className={`${N} ${T} w-[271px]`}>1.10</span>
      <span className="w-[60px] text-[12px]">上证指数</span>
      <span className={`${N} w-[52px] text-[#007000]`}>2997.10</span>
      <span className={`${N} w-[46px] text-[#007000]`}>-45.93</span>
      <span className={`${N} w-[57px] text-[#007000]`}>-1.51%</span>
      <span className={`${N} ${T}`}>1.05%</span>
    </div>
  );
}

function StatusBar() {
  const G = "font-['Liberation_Sans'] text-[13px] font-bold text-[#007a10]";
  const group = (name: string, a: string, b: string, c: string, d: string) => (
    <div className="flex items-center">
      <span className="w-[24px] text-[12px]">{name}</span>
      <span className={`${G} w-[54px]`}>{a}</span>
      <span className={`${G} w-[45px]`}>{b}</span>
      <span className={`${G} w-[47px]`}>{c}</span>
      <span className="w-[47px] text-[12px]">{d}</span>
    </div>
  );
  return (
    <div className="flex h-[21px] items-center whitespace-nowrap bg-[#f0f0f0] pt-[1px] text-black">
      <svg viewBox="0 0 14 14" className="ml-[3px] h-[13px] w-[13px] shrink-0">
        <rect width="14" height="14" fill="#f0a020" />
        <rect x="5" y="2" width="7" height="7" fill="#fff" stroke="#c07010" />
        <rect x="2" y="5" width="7" height="7" fill="#ffd870" stroke="#c07010" />
      </svg>
      <div className="ml-[2px]">{group("上证", "2997.10", "-45.93", "-1.51%", "3414亿")}</div>
      {group("沪深", "3700.44", "-42.39", "-1.13%", "1965亿")}
      {group("创业", "1630.19", "-38.65", "-2.32%", "1215亿")}
      <div className="ml-[2px] flex h-full items-center border-l border-[#a0a0a0] pl-[7px]">
        <span className="w-[50px] text-[12px]">总成交</span>
        <span className="text-[12px]">7683亿</span>
      </div>
      <div className="ml-[14px] flex h-full items-center border-l border-[#a0a0a0] pl-[5px] text-[12px]">阿里云122</div>
      <div className="ml-auto mr-[34px] flex items-center gap-[4px]">
        <svg viewBox="0 0 14 14" className="h-[14px] w-[14px]"><rect x="1" y="1" width="12" height="12" fill="#fff" stroke="#888" /><path d="M3 4h8M3 6.500h8M3 9h8M3 11h8" stroke="#aaa" /></svg>
        <svg viewBox="0 0 14 14" className="h-[14px] w-[14px]"><rect x="1" y="1" width="12" height="12" rx="3" fill="#e8d040" stroke="#a09010" /><path d="M7 3v8" stroke="#806000" strokeWidth="2" /></svg>
        <svg viewBox="0 0 14 14" className="h-[14px] w-[14px]"><ellipse cx="7" cy="5" rx="5" ry="4" fill="#999" /><path d="M7 8v5" stroke="#777" strokeWidth="2" /></svg>
        <svg viewBox="0 0 10 14" className="h-[14px] w-[10px]"><path d="M5 0l3 4H2z" fill="#e02020" /><path d="M5 5l3 4H2z" fill="#e8c020" /><path d="M5 10l3 4H2z" fill="#109020" /></svg>
        <svg viewBox="0 0 6 14" className="ml-[2px] h-[14px] w-[6px]"><rect x="1" y="2" width="4" height="6" fill="#888" /><rect x="2.500" y="8" width="1" height="4" fill="#888" /></svg>
      </div>
    </div>
  );
}

export default function App() {
  return (
    <div className="relative flex h-[984px] w-[1280px] flex-col overflow-hidden bg-black font-['Liberation_Sans','Noto_Sans_CJK_SC',sans-serif]">
      <Header />
      <div className="flex h-[906px] text-[12px]">
        <ChartColumn />
        <RightPanel />
        <Sidebar />
      </div>
      <QuoteStrip />
      <StatusBar />
      {/* red roundel at the right edge */}
      <div className="absolute left-[1264px] top-[797px] h-[52px] w-[52px] rounded-full border-[2px] border-white bg-white">
        <div className="h-full w-full rounded-full border-[10px] border-[#e8404a] bg-white" />
      </div>
      {/* window controls */}
      <div className="absolute left-[1184px] top-[11px] flex items-center gap-[26px] text-white">
        <div className="h-px w-[10px] bg-white" />
        <div className="h-[11px] w-[10px] border border-white" />
        <svg viewBox="0 0 10 10" className="ml-[2px] h-[10px] w-[10px]" stroke="#fff"><path d="M0 0l10 10M10 0L0 10" /></svg>
      </div>
      {/* watermark */}
      <div className="absolute left-[1131px] top-[13px] origin-top scale-y-[1.15] whitespace-nowrap text-[32px] font-bold leading-[36px] text-[#707070]/55">股海明灯</div>
    </div>
  );
}
